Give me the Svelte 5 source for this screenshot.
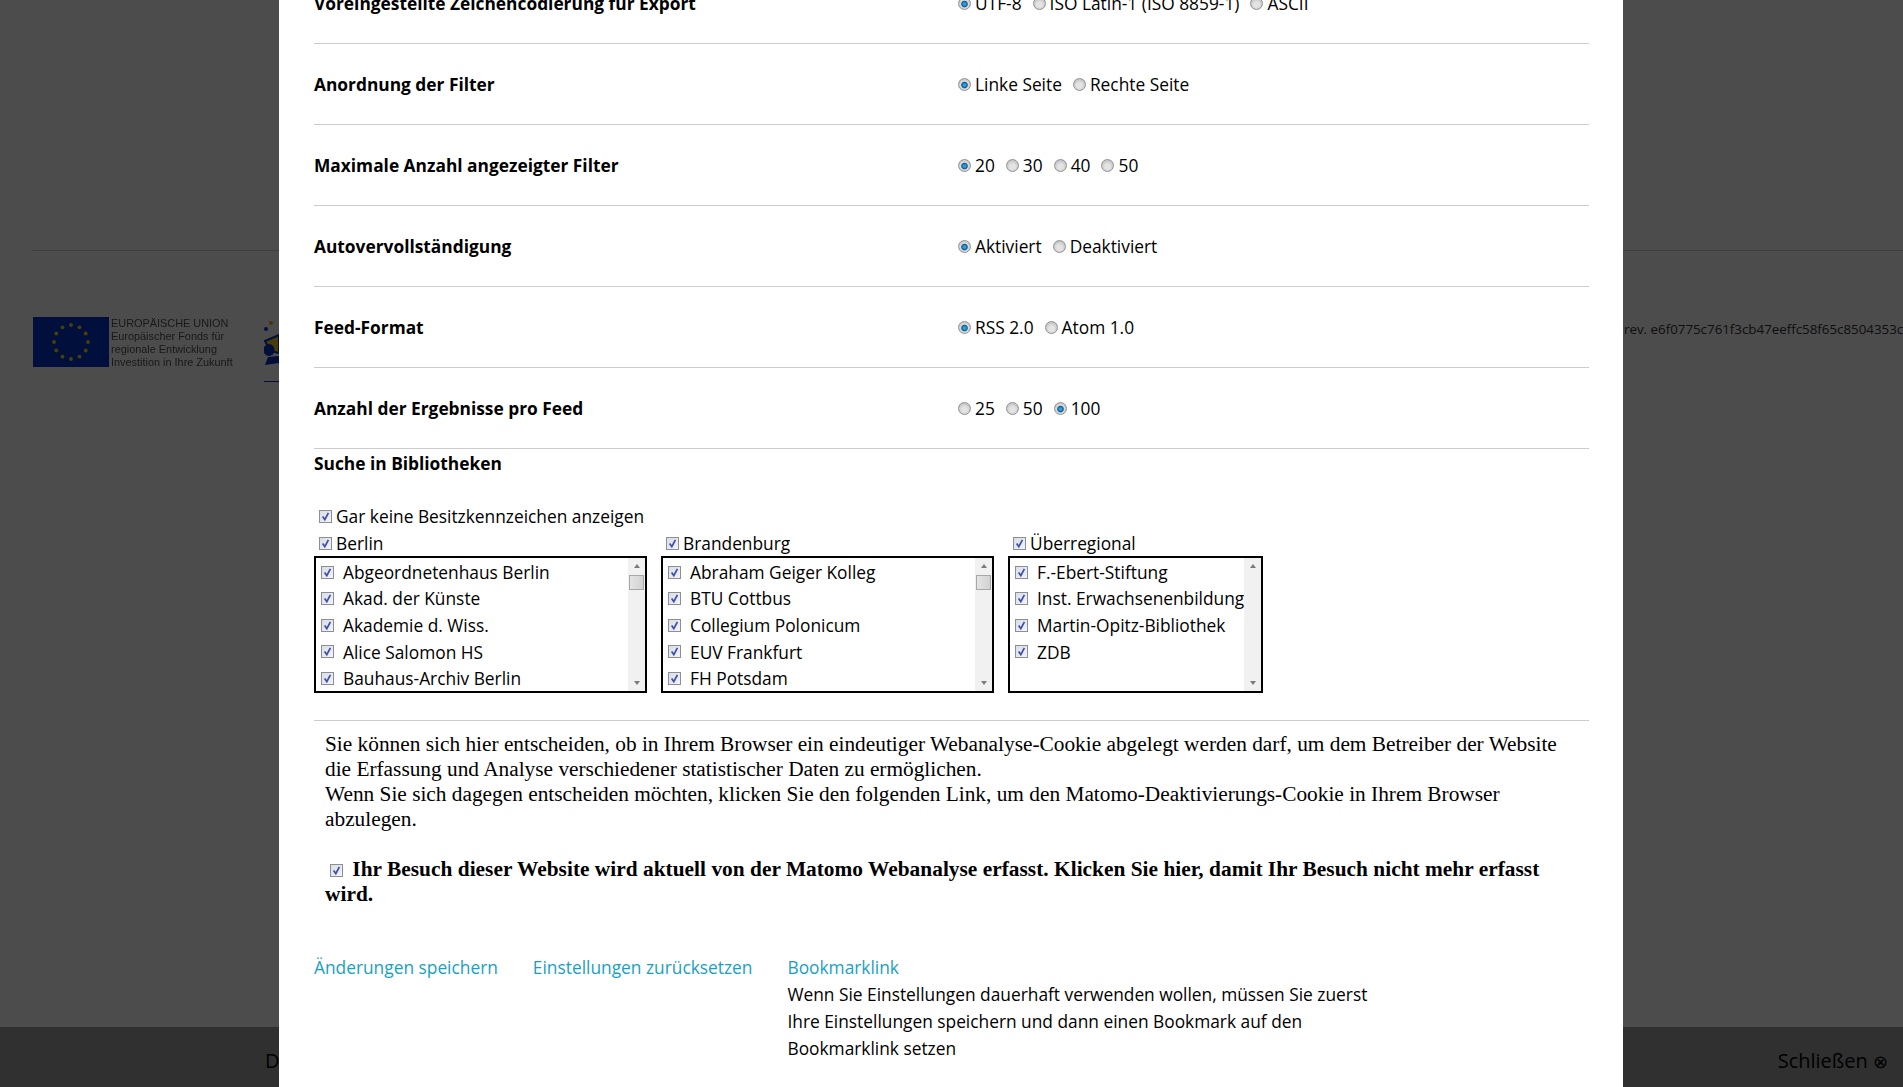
<script>
    // Einstellungen: Zeilen mit Radiobuttons
    const settings = [
        { label: "Voreingestellte Zeichencodierung für Export", name: "enc", options: ["UTF-8", "ISO Latin-1 (ISO 8859-1)", "ASCII"], value: "UTF-8" },
        { label: "Anordnung der Filter", name: "filterpos", options: ["Linke Seite", "Rechte Seite"], value: "Linke Seite" },
        { label: "Maximale Anzahl angezeigter Filter", name: "maxfilter", options: ["20", "30", "40", "50"], value: "20" },
        { label: "Autovervollständigung", name: "auto", options: ["Aktiviert", "Deaktiviert"], value: "Aktiviert" },
        { label: "Feed-Format", name: "feed", options: ["RSS 2.0", "Atom 1.0"], value: "RSS 2.0" },
        { label: "Anzahl der Ergebnisse pro Feed", name: "feedcount", options: ["25", "50", "100"], value: "100" }
    ];

    const regions = [
        { name: "Berlin", width: 333, thumb: true, libs: ["Abgeordnetenhaus Berlin", "Akad. der Künste", "Akademie d. Wiss.", "Alice Salomon HS", "Bauhaus-Archiv Berlin", "Berlinische Galerie"] },
        { name: "Brandenburg", width: 333, thumb: true, libs: ["Abraham Geiger Kolleg", "BTU Cottbus", "Collegium Polonicum", "EUV Frankfurt", "FH Potsdam", "FH Brandenburg"] },
        { name: "Überregional", width: 255, thumb: false, libs: ["F.-Ebert-Stiftung", "Inst. Erwachsenenbildung", "Martin-Opitz-Bibliothek", "ZDB"] }
    ];

    const stars = Array.from({ length: 12 }, (_, i) => {
        const a = (i * Math.PI) / 6;
        return { x: 38 + 17 * Math.sin(a), y: 25 - 17 * Math.cos(a) };
    });
</script>

<div class="page">
    <div class="top"></div>
    <div class="logos">
        <div class="eu">
            <svg class="flag" width="76" height="50" viewBox="0 0 76 50">
                <rect width="76" height="50" fill="#0035c8" />
                {#each stars as s}
                    <circle cx={s.x} cy={s.y} r="1.9" fill="#ffd400" />
                {/each}
            </svg>
            <div class="eu-text">
                <div>EUROPÄISCHE UNION</div>
                <div>Europäischer Fonds für</div>
                <div>regionale Entwicklung</div>
                <div>Investition in Ihre Zukunft</div>
            </div>
        </div>
        <svg class="logo2" width="60" height="72" viewBox="0 0 60 72">
            <circle cx="7" cy="8" r="2" fill="#e0b020" />
            <circle cx="2" cy="14" r="2" fill="#0a30c0" />
            <path d="M1 26 L15 20 L15 38 L6 36 Z" fill="#f0c828" stroke="#0a30c0" stroke-width="2" />
            <ellipse cx="5" cy="35" rx="5.5" ry="6" fill="#0a30c0" />
            <path d="M4 42 L15 41 L15 48 L1 50 Z" fill="#0a30c0" />
            <rect x="0" y="66" width="15" height="1" fill="#0a30c0" />
        </svg>
        <span class="rev">rev. e6f0775c761f3cb47eeffc58f65c8504353cab12</span>
    </div>
    <div class="notice">
        <span>Diese Website verwendet Cookies</span>
        <span class="close">Schließen <span class="x">⊗</span></span>
    </div>
</div>

<div class="backdrop"></div>

<div class="modal">
    <div class="inner">
        {#each settings as row}
            <div class="row">
                <strong>{row.label}</strong>
                <div class="options">
                    {#each row.options as opt}
                        <label class="opt">
                            <input type="radio" name={row.name} checked={opt === row.value} />{opt}
                        </label>
                    {/each}
                </div>
            </div>
        {/each}

        <h3>Suche in Bibliotheken</h3>
        <label class="region-check first"><input type="checkbox" checked />Gar keine Besitzkennzeichen anzeigen</label>

        <div class="regions">
            {#each regions as region}
                <div class="region" style="width: {region.width}px">
                    <label class="region-check"><input type="checkbox" checked />{region.name}</label>
                    <div class="box">
                        <div class="list">
                            {#each region.libs as lib}
                                <label class="lib"><input type="checkbox" checked />{lib}</label>
                            {/each}
                        </div>
                        <div class="scrollbar">
                            <span class="arrow up"></span>
                            {#if region.thumb}
                                <span class="thumb"></span>
                            {/if}
                            <span class="arrow down"></span>
                        </div>
                    </div>
                </div>
            {/each}
        </div>

        <div class="matomo">
            <p>
                Sie können sich hier entscheiden, ob in Ihrem Browser ein eindeutiger Webanalyse-Cookie abgelegt werden darf, um dem Betreiber der Website die Erfassung und Analyse verschiedener statistischer Daten zu ermöglichen.<br />
                Wenn Sie sich dagegen entscheiden möchten, klicken Sie den folgenden Link, um den Matomo-Deaktivierungs-Cookie in Ihrem Browser abzulegen.
            </p>
            <p class="optout">
                <input type="checkbox" checked />
                <strong>Ihr Besuch dieser Website wird aktuell von der Matomo Webanalyse erfasst. Klicken Sie hier, damit Ihr Besuch nicht mehr erfasst wird.</strong>
            </p>
        </div>

        <div class="actions">
            <a href="#save">Änderungen speichern</a>
            <a href="#reset">Einstellungen zurücksetzen</a>
            <div class="bookmark">
                <a href="#bookmark">Bookmarklink</a>
                <p>Wenn Sie Einstellungen dauerhaft verwenden wollen, müssen Sie zuerst Ihre Einstellungen speichern und dann einen Bookmark auf den Bookmarklink setzen</p>
            </div>
        </div>
    </div>
</div>

<style>
    :global(body) {
        margin: 0;
        background: #fff;
        font-family: "Open Sans", sans-serif;
        overflow: hidden;
    }

    .page {
        height: 1087px;
        display: flex;
        flex-direction: column;
        overflow: hidden;
        color: #333;
    }

    .top {
        height: 250px;
        margin-left: 32px;
        border-bottom: 1px solid #d4d4d4;
        flex: none;
    }

    .logos {
        flex: 1;
        display: flex;
        align-items: flex-start;
        padding: 66px 0 0 33px;
    }

    .eu {
        display: flex;
        gap: 2px;
        width: 231px;
        flex: none;
        filter: blur(0.35px);
    }

    .eu-text {
        font-family: "Liberation Sans", sans-serif;
        font-size: 10.9px;
        line-height: 13px;
        color: #555;
        white-space: nowrap;
    }

    .logo2 {
        flex: none;
        margin-top: -2px;
        filter: blur(0.5px);
    }

    .rev {
        margin-left: 1300px;
        margin-top: 3px;
        flex: none;
        font-size: 13.33px;
        white-space: nowrap;
    }

    .notice {
        height: 60px;
        flex: none;
        box-sizing: border-box;
        background: #a0a0a0;
        color: #000;
        font-size: 20px;
        display: flex;
        align-items: center;
        justify-content: space-between;
        padding: 6px 15px 0 265px;
    }

    .x {
        font-size: 18px;
    }

    .backdrop {
        position: fixed;
        inset: 0;
        background: rgba(0, 0, 0, 0.7);
    }

    .modal {
        position: fixed;
        top: 0;
        left: 279px;
        width: 1344px;
        height: 1087px;
        background: #fff;
        overflow: hidden;
        color: #000;
        font-size: 17.33px;
        line-height: 26.67px;
    }

    .inner {
        margin-top: -37px;
        padding: 0 34px 0 35px;
    }

    .row {
        display: grid;
        grid-template-columns: 643px 1fr;
        align-items: center;
        height: 80px;
        border-bottom: 1px solid #ccc;
    }

    .options {
        display: flex;
        gap: 11px;
        padding-left: 1px;
    }

    .opt {
        display: flex;
        align-items: center;
        white-space: nowrap;
    }

    input[type="radio"] {
        appearance: none;
        width: 13px;
        height: 13px;
        margin: 2px 4px 0 0;
        border: 1px solid #929292;
        border-radius: 50%;
        background: radial-gradient(circle at 50% 60%, #e4e4e4 0 30%, #b0b0b0 100%);
        box-sizing: border-box;
    }

    input[type="radio"]:checked {
        background: radial-gradient(circle at 50% 55%, #2f9fe0 0 14%, #0b5a94 34%, #dcdcdc 46%, #b0b0b0 100%);
    }

    input[type="checkbox"] {
        appearance: none;
        width: 13px;
        height: 13px;
        margin: 0;
        border: 1px solid #8e8e8e;
        box-sizing: border-box;
        flex: none;
        background: url("data:image/svg+xml,%3Csvg xmlns='http://www.w3.org/2000/svg' width='11' height='11'%3E%3Cpath d='M2.6 5.6 L4.8 8.6 L8.4 1.8' fill='none' stroke='%233f4fa8' stroke-width='1.7'/%3E%3C/svg%3E") center no-repeat, linear-gradient(135deg, #d8dde8, #f2f4f8);
    }

    h3 {
        margin: 1px 0 26px;
        font-size: inherit;
        line-height: inherit;
        font-weight: bold;
    }

    .region-check {
        display: flex;
        align-items: center;
        gap: 4px;
        padding-left: 5px;
        height: 27px;
    }

    .regions {
        display: flex;
        gap: 14px;
    }

    .box {
        display: flex;
        height: 133px;
        border: 2px solid #000;
        overflow: hidden;
        margin-top: -1px;
    }

    .list {
        flex: 1;
        min-width: 0;
        padding-top: 1px;
        overflow: hidden;
    }

    .lib {
        display: flex;
        align-items: center;
        gap: 9px;
        padding-left: 5px;
        height: 26.67px;
        white-space: nowrap;
    }

    .scrollbar {
        width: 17px;
        flex: none;
        background: #f1f1f1;
        display: flex;
        flex-direction: column;
        align-items: center;
    }

    .arrow {
        width: 0;
        height: 0;
        border-left: 3.5px solid transparent;
        border-right: 3.5px solid transparent;
    }

    .arrow.up {
        border-bottom: 4px solid #7a7a7a;
        margin-top: 6px;
    }

    .arrow.down {
        border-top: 4px solid #7a7a7a;
        margin-top: auto;
        margin-bottom: 6px;
    }

    .thumb {
        width: 15px;
        height: 15px;
        margin-top: 7px;
        box-sizing: border-box;
        border: 1px solid #a8a8a8;
        background: linear-gradient(90deg, #e4e4e4, #d2d2d2);
    }

    .matomo {
        margin-top: 27px;
        border-top: 1px solid #ccc;
        padding: 11px 10px 0 11px;
        font-family: "Liberation Serif", serif;
        font-size: 21.33px;
        line-height: 25px;
    }

    .matomo p {
        margin: 0 0 25px;
    }

    .optout input {
        margin: 0 4px 0 5px;
        vertical-align: -1px;
    }

    .optout strong {
        letter-spacing: 0.03px;
    }

    .actions {
        display: flex;
        align-items: flex-start;
        margin-top: 47px;
    }

    .actions a {
        color: #1a9fc4;
        text-decoration: none;
        margin-right: 35px;
        white-space: nowrap;
    }

    .bookmark {
        width: 600px;
    }

    .bookmark p {
        margin: 1px 0 0;
    }
</style>
